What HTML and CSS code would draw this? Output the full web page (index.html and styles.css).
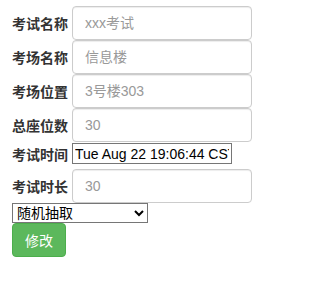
FILE: index.html
```html
<!DOCTYPE html>
<html>
<head>
<meta charset="utf-8">
<link rel="stylesheet" href="styles.css">
</head>
<body>
<form class="form">
  <div class="row"><label class="lbl">考试名称</label><input class="fc" type="text" placeholder="xxx考试"></div>
  <div class="row"><label class="lbl">考场名称</label><input class="fc" type="text" placeholder="信息楼"></div>
  <div class="row"><label class="lbl">考场位置</label><input class="fc" type="text" placeholder="3号楼303"></div>
  <div class="row"><label class="lbl">总座位数</label><input class="fc" type="text" placeholder="30"></div>
  <div class="row row-time"><label class="lbl">考试时间</label><input class="plain" type="text" value="Tue Aug 22 19:06:44 CST 2017"></div>
  <div class="row row-dur"><label class="lbl">考试时长</label><input class="fc" type="text" placeholder="30"></div>
  <select class="sel"><option>随机抽取</option></select>
  <button class="btn" type="button">修改</button>
</form>
</body>
</html>
```
FILE: styles.css
```css
html, body {
  margin: 0;
  padding: 0;
  background: #fff;
}
body {
  font-family: "Liberation Sans", "Noto Sans CJK SC", sans-serif;
  font-size: 14px;
  color: #333;
}
.form {
  display: flex;
  flex-direction: column;
  align-items: flex-start;
  padding: 6px 0 0 12px;
}
.row {
  display: flex;
  align-items: center;
  height: 34px;
}
.lbl {
  font-family: "Noto Sans CJK SC", sans-serif;
  font-weight: bold;
  font-size: 14px;
  color: #333;
  width: 56px;
  margin-right: 4px;
  white-space: nowrap;
}
.fc {
  box-sizing: border-box;
  width: 180px;
  height: 34px;
  padding: 6px 12px;
  font-family: "Liberation Sans", "Noto Sans CJK SC", sans-serif;
  font-size: 14px;
  color: #555;
  background: #fff;
  border: 1px solid #ccc;
  border-radius: 4px;
  box-shadow: inset 0 1px 1px rgba(0,0,0,.075);
  outline: none;
}
.fc::placeholder {
  color: #999;
}
.row-time {
  height: 21px;
  margin-top: 1px;
}
.plain {
  box-sizing: border-box;
  width: 160px;
  height: 21px;
  padding: 1px 2px;
  font-family: "Liberation Sans", sans-serif;
  font-size: 14px;
  color: #000;
  border: 1px solid #767676;
  border-radius: 0;
  background: #fff;
}
.row-dur {
  margin-top: 5px;
}
.sel {
  box-sizing: border-box;
  width: 136px;
  height: 20px;
  font-family: "Liberation Sans", "Noto Sans CJK SC", sans-serif;
  font-size: 14px;
  color: #000;
  border: 1px solid #767676;
  border-radius: 0;
  background: #fff;
  padding: 0;
}
.btn {
  box-sizing: border-box;
  height: 34px;
  padding: 6px 12px;
  font-family: "Noto Sans CJK SC", sans-serif;
  font-size: 14px;
  line-height: 20px;
  color: #fff;
  background: #5cb85c;
  border: 1px solid #4cae4c;
  border-radius: 4px;
}
```
